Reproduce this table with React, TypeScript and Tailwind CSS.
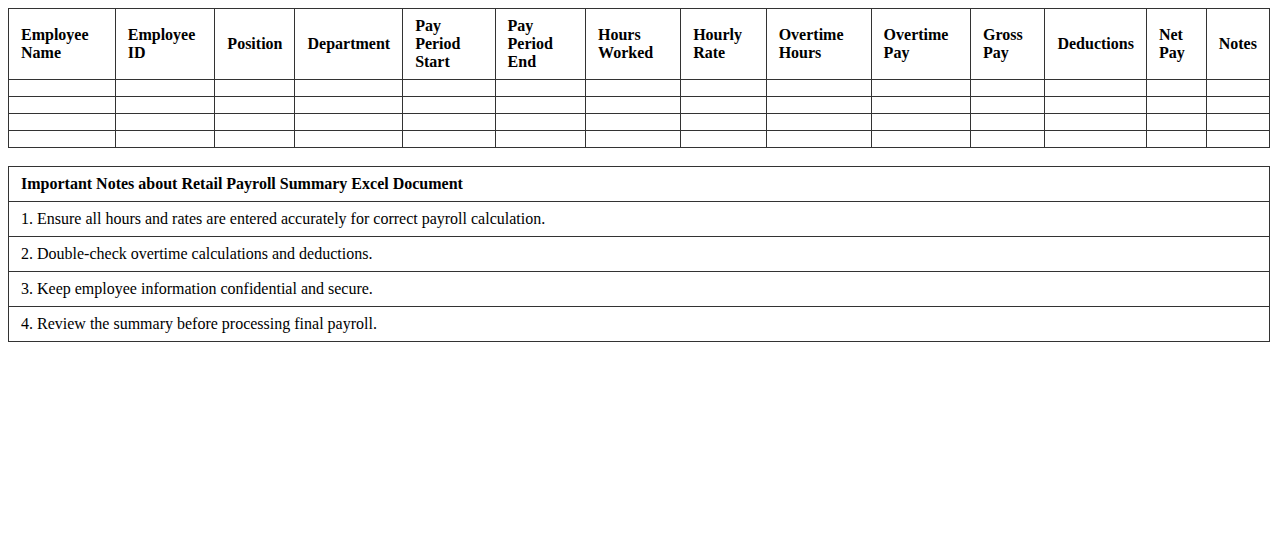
import React from 'react';

const headers = [
  'Employee Name',
  'Employee ID',
  'Position',
  'Department',
  'Pay Period Start',
  'Pay Period End',
  'Hours Worked',
  'Hourly Rate',
  'Overtime Hours',
  'Overtime Pay',
  'Gross Pay',
  'Deductions',
  'Net Pay',
  'Notes',
];

const notes = [
  '1. Ensure all hours and rates are entered accurately for correct payroll calculation.',
  '2. Double-check overtime calculations and deductions.',
  '3. Keep employee information confidential and secure.',
  '4. Review the summary before processing final payroll.',
];

const App: React.FC = () => {
  return (
    <div className="p-2 bg-white min-h-screen text-black text-base leading-[normal] font-['Liberation_Serif','Times_New_Roman',serif]">
      {/* Payroll table */}
      <table className="w-full border-collapse border border-[#333]">
        <thead>
          <tr>
            {headers.map((h) => (
              <th key={h} className="border border-[#333] px-3 py-2 text-left align-middle font-bold">
                {h}
              </th>
            ))}
          </tr>
        </thead>
        <tbody>
          {[0, 1, 2, 3].map((r) => (
            <tr key={r}>
              {headers.map((h) => (
                <td key={h} className="border border-[#333] px-3 py-2"></td>
              ))}
            </tr>
          ))}
        </tbody>
      </table>

      {/* Notes */}
      <table className="w-full border-collapse border border-[#333] mt-[18px]">
        <thead>
          <tr>
            <th className="border border-[#333] px-3 py-2 text-left font-bold">
              Important Notes about Retail Payroll Summary Excel Document
            </th>
          </tr>
        </thead>
        <tbody>
          {notes.map((n) => (
            <tr key={n}>
              <td className="border border-[#333] px-3 py-2">{n}</td>
            </tr>
          ))}
        </tbody>
      </table>
    </div>
  );
};

export default App;
